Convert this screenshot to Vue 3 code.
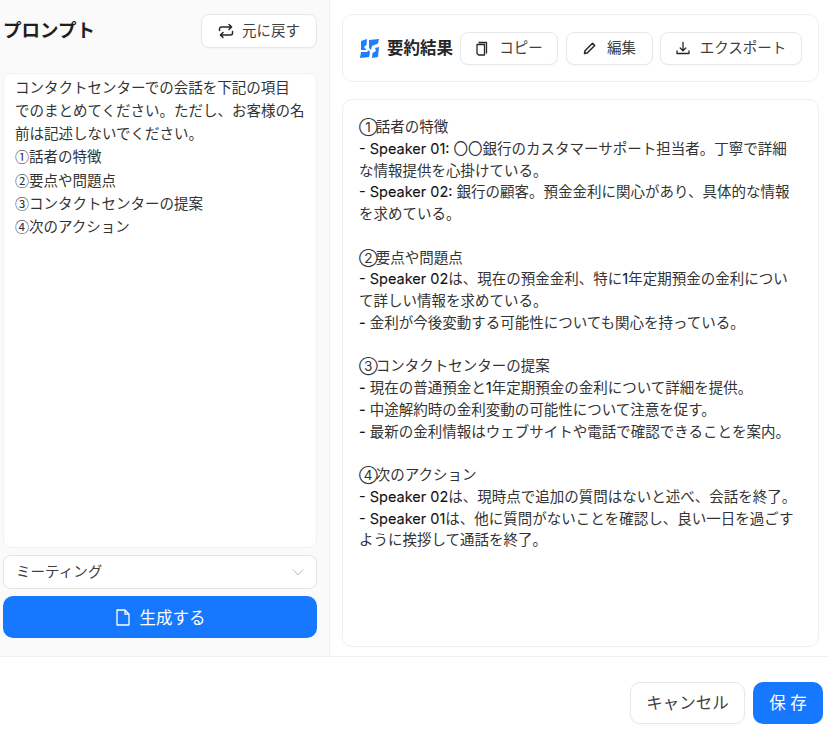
<script setup>
const split = (line) =>
  line.split(/([①②③④]|[\x21-\x7e][\x20-\x7e]*[\x21-\x7e]|[\x21-\x7e])/).filter(Boolean).map((t) => ({
    t,
    c: /^[①②③④]$/.test(t) ? 'circled' : /^[\x21-\x7e]/.test(t) ? 'latin' : ''
  }))
const promptLines = [
  'コンタクトセンターでの会話を下記の項目',
  'でのまとめてください。ただし、お客様の名',
  '前は記述しないでください。',
  '①話者の特徴',
  '②要点や問題点',
  '③コンタクトセンターの提案',
  '④次のアクション'
].map(split)
const resultLines = [
  '①話者の特徴',
  '- Speaker 01: 〇〇銀行のカスタマーサポート担当者。丁寧で詳細',
  'な情報提供を心掛けている。',
  '- Speaker 02: 銀行の顧客。預金金利に関心があり、具体的な情報',
  'を求めている。',
  '',
  '②要点や問題点',
  '- Speaker 02は、現在の預金金利、特に1年定期預金の金利につい',
  'て詳しい情報を求めている。',
  '- 金利が今後変動する可能性についても関心を持っている。',
  '',
  '③コンタクトセンターの提案',
  '- 現在の普通預金と1年定期預金の金利について詳細を提供。',
  '- 中途解約時の金利変動の可能性について注意を促す。',
  '- 最新の金利情報はウェブサイトや電話で確認できることを案内。',
  '',
  '④次のアクション',
  '- Speaker 02は、現時点で追加の質問はないと述べ、会話を終了。',
  '- Speaker 01は、他に質問がないことを確認し、良い一日を過ごす',
  'ように挨拶して通話を終了。'
].map(split)
</script>

<template>
  <div class="page">
    <div class="main">
      <section class="left">
        <header class="left-head">
          <h2 class="title">プロンプト</h2>
          <button class="btn reset">
            <svg width="16" height="16" viewBox="0 0 16 16" fill="none" stroke="#262626" stroke-width="1.5" stroke-linecap="round" stroke-linejoin="round"><path d="M1.500 7.500V6a2 2 0 0 1 2-2h10M11 1.500 13.600 4 11 6.500"/><path d="M14.500 8.500V10a2 2 0 0 1-2 2h-10M5 9.500 2.400 12 5 14.500"/></svg>
            <span class="lift">元に戻す</span>
          </button>
        </header>
        <div class="prompt">
          <div v-for="(l, i) in promptLines" :key="i" class="p-line"><span v-for="(s, j) in l" :key="j" :class="s.c">{{ s.t }}</span></div>
        </div>
        <div class="select">
          <span class="lift">ミーティング</span>
          <svg width="12" height="12" viewBox="0 0 12 12" fill="none" stroke="#bfbfbf" stroke-width="1"><path d="M1 3.500 6 9l5-5.500"/></svg>
        </div>
        <button class="generate">
          <svg width="16" height="17" viewBox="0 0 16 17" fill="none" stroke="#fff" stroke-width="1.3" stroke-linejoin="round"><path d="M2 1h8l4 4.200V16H2zM10 1v4.200h4"/></svg>
          <span>生成する</span>
        </button>
      </section>
      <section class="right">
        <div class="toolbar">
          <svg class="logo" width="20" height="19" viewBox="0 0 20 19" fill="#1f7dff"><path d="M1 2 7 0 6.500 6 4 8 6.500 11 1 11z"/><path d="M9 1 19 0 18 4.500 12 7 11 11 9 9z"/><path d="M15 9 19 8 18 18 12 19 12.500 14 16 12z"/><path d="M1 13 7 13 9 11 10 14 9 18 0 19z"/></svg>
          <strong class="result-title">要約結果</strong>
          <button class="btn tool copy">
            <svg width="14" height="15" viewBox="0 0 14 15" fill="none" stroke="#262626" stroke-width="1.3" stroke-linejoin="round"><path d="M3.500 1.500h8v11M2 3.500h7.500V14H3.500L2 12.500z"/></svg>
            <span class="lift">コピー</span>
          </button>
          <button class="btn tool edit">
            <svg width="14" height="14" viewBox="0 0 14 14" fill="none" stroke="#262626" stroke-width="1.500" stroke-linejoin="round"><path d="M1.500 12.500 2 9.800 9.500 2.300l2.200 2.200L4.200 12z"/></svg>
            <span class="lift">編集</span>
          </button>
          <button class="btn tool export">
            <svg width="14" height="14" viewBox="0 0 14 14" fill="none" stroke="#262626" stroke-width="1.300" stroke-linecap="round" stroke-linejoin="round"><path d="M7 1.500v8M4.200 7 7 9.700 9.800 7M1 10v2.500h12V10"/></svg>
            <span class="lift">エクスポート</span>
          </button>
        </div>
        <div class="result">
          <div v-for="(l, i) in resultLines" :key="i" class="r-line"><span v-for="(s, j) in l" :key="j" :class="s.c">{{ s.t }}</span></div>
        </div>
      </section>
    </div>
    <footer class="footer">
      <button class="btn foot-cancel"><span class="lift1">キャンセル</span></button>
      <button class="foot-save"><span class="lift1">保 存</span></button>
    </footer>
  </div>
</template>

<style>
body { margin: 0; background: #fff; }
</style>

<style scoped>
.page {
  width: 828px;
  height: 733px;
  display: flex;
  flex-direction: column;
  overflow: hidden;
  font-family: Inter, "Noto Sans CJK JP", sans-serif;
  color: #262626;
  background: #fff;
}
.main {
  height: 657px;
  display: flex;
  border-bottom: 1px solid #f0f0f0;
  box-sizing: border-box;
}
.left {
  width: 330px;
  box-sizing: border-box;
  background: #fafafa;
  border-right: 1px solid #f0f0f0;
  padding: 14px 12px 18px 3px;
  display: flex;
  flex-direction: column;
}
.left-head {
  display: flex;
  align-items: center;
  justify-content: space-between;
  height: 34px;
  margin-bottom: 25px;
}
.title {
  margin: 0 0 2px;
  font-size: 18.5px;
  font-weight: 700;
  line-height: 32px;
  color: #1f1f1f;
}
.btn {
  display: inline-flex;
  align-items: center;
  justify-content: center;
  box-sizing: border-box;
  background: #fff;
  border: 1px solid #e8e8e8;
  border-radius: 8px;
  box-shadow: 0 1px 2px rgba(0, 0, 0, 0.03);
  font: inherit;
  color: #404040;
  padding: 0;
}
.lift { margin-bottom: 3px; }
.lift1 { display: block; margin-bottom: 2px; }
.reset {
  width: 116px;
  height: 34px;
  gap: 8px;
  font-size: 14.5px;
}
.prompt {
  flex: 1;
  background: #fff;
  border-radius: 8px;
  border: 1px solid #f2f2f2;
  box-sizing: border-box;
  padding: 2px 12px 0 11px;
  font-size: 14.5px;
  line-height: 23.15px;
  color: #333;
  margin-bottom: 7px;
}
.p-line { white-space: nowrap; height: 23.15px; }
.prompt .circled {
  font-family: "Noto Sans CJK JP", sans-serif;
  font-size: 14px;
}
.latin {
  font-weight: 400;
  color: #111;
  -webkit-text-stroke: 0.1px #111;
}
.select {
  height: 34px;
  box-sizing: border-box;
  background: #fff;
  border: 1px solid #e3e3e3;
  border-radius: 8px;
  display: flex;
  align-items: center;
  justify-content: space-between;
  padding: 0 12px;
  font-size: 14.5px;
  color: #404040;
  margin-bottom: 7px;
}
.generate {
  height: 42px;
  border: none;
  border-radius: 10px;
  background: #1677ff;
  color: #fff;
  font: inherit;
  font-size: 16.5px;
  display: flex;
  align-items: center;
  justify-content: center;
  gap: 9px;
  padding: 0;
}
.right {
  flex: 1;
  box-sizing: border-box;
  padding: 14px 9px 9px 12px;
  display: flex;
  flex-direction: column;
  gap: 17px;
  min-width: 0;
}
.toolbar {
  height: 68px;
  box-sizing: border-box;
  border: 1px solid #f0f0f0;
  border-radius: 10px;
  display: flex;
  align-items: center;
  padding: 0 17px;
}
.logo { margin-right: 7px; flex-shrink: 0; }
.result-title {
  font-size: 16.5px;
  font-weight: 600;
  color: #262626;
  margin: 0 7px 3px 0;
  white-space: nowrap;
  flex-shrink: 0;
}
.tool {
  height: 33px;
  gap: 10px;
  font-size: 14.5px;
  flex-shrink: 0;
}
.copy { width: 98px; margin-right: 8px; }
.edit { width: 87px; margin-right: 7px; }
.export { width: 142px; }
.result {
  flex: 1;
  border: 1px solid #f0f0f0;
  border-radius: 10px;
  box-sizing: border-box;
  padding: 16px 16px;
  font-size: 14.5px;
  line-height: 21.75px;
  color: #333;
}
.result .circled { font-size: 13.5px; letter-spacing: -2px; }
.r-line { white-space: nowrap; height: 21.75px; }
.footer {
  flex: 1;
  display: flex;
  justify-content: flex-end;
  align-items: flex-start;
  gap: 8px;
  padding: 25px 5px 0 0;
}
.foot-cancel {
  width: 115px;
  height: 42px;
  font-size: 16.5px;
  border-radius: 10px;
}
.foot-save {
  width: 70px;
  height: 42px;
  border: none;
  border-radius: 10px;
  background: #1677ff;
  color: #fff;
  font: inherit;
  font-size: 16.5px;
  padding: 0;
}
</style>
